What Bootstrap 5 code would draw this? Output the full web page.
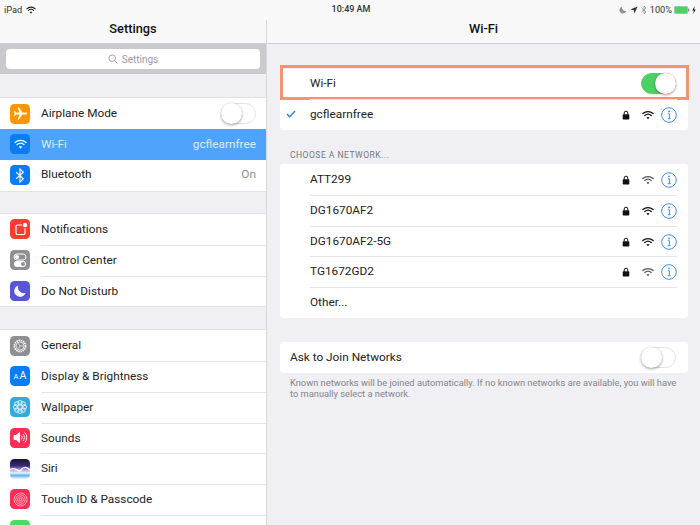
<!DOCTYPE html>
<html lang="en">
<head>
<meta charset="utf-8">
<title>Wi-Fi Settings</title>
<link href="https://cdn.jsdelivr.net/npm/bootstrap@5.3.0/dist/css/bootstrap.min.css" rel="stylesheet">
<style>
html,body{height:525px;overflow:hidden}
body{background:#efeff4;font-family:Roboto,"Liberation Sans",sans-serif;font-size:11.8px;color:#222}
.ios-status{height:20px;background:#f8f8f8;font-size:9.2px;color:#333;padding:0 4px}
.ios-clock{position:absolute;left:2px;right:0;text-align:center;font-weight:500;font-size:9px}
.ios-side{width:267px;flex:none;border-right:1px solid #d8d8dc;height:505px;overflow:hidden}
.ios-main{flex:1 1 auto;min-width:0;padding:0 12px 0 13px}
.ios-nav{height:24px;background:#f8f8f8;border-bottom:1px solid #cfcfd3;font-size:12.8px;font-weight:500;color:#111;padding-bottom:5px}
.ios-nav-main{margin:0 -12px 0 -13px}
.ios-search{height:30px;background:#c9c9ce;padding:5px 6px}
.ios-field{height:20px;background:#fff;border-radius:4px;color:#9a9a9f;font-size:10px}
.ios-group{background:#fff;box-shadow:0 -1px #e3e3e7,0 1px #e3e3e7;margin-top:23.5px}
.ios-g1{margin-top:24.25px}
.ios-g3{margin-top:24px}
.ios-row{height:30.75px;padding-left:10px}
.ios-row-on{background:#4fa3fa;color:#d9ecff}
.ios-ic{width:20px;height:20px;border-radius:4.5px;flex:none;margin-right:11px}
.ios-body{height:100%;padding-right:10px;min-width:0}
.ios-row+.ios-row .ios-body{border-top:1px solid #e6e6ea}
.ios-row-on .ios-body,.ios-row-on+.ios-row .ios-body{border-top:0!important}
.ios-val{color:#8e8e93}
.ios-row-on .ios-val{color:#d9ecff}
.ios-switch{width:35px;height:21px;border-radius:11px;background:#fff;border:1px solid #e2e2e6;position:relative;flex:none}
.ios-knob{position:absolute;left:-1px;top:-1px;width:21px;height:21px;border-radius:50%;background:#fff;box-shadow:0 1px 3px rgba(0,0,0,.4)}
.ios-switch-on{background:#4cd264;border-color:#4cd264}
.ios-switch-on .ios-knob{left:13px}
.ios-main .ios-switch{margin-right:1px}
.ios-card{background:#fff;border-radius:3px}
.ios-card-first{margin-top:24.5px}
.ios-card-first .ios-drow{height:30.5px}
.ios-drow{height:30.7px;padding-right:11px;position:relative}
.ios-indent{width:30px;flex:none}
.ios-dbody{height:100%;min-width:0}
.ios-drow+.ios-drow .ios-dbody{border-top:1px solid #e6e6ea}
.ios-head{font-size:8.6px;color:#77777c;letter-spacing:.45px;padding:20px 0 4.8px 10px;line-height:10px}
.ios-hl{position:absolute;left:0;right:-1px;top:-3.5px;bottom:-1px;border:3px solid #f4936f;pointer-events:none}
.ios-foot{font-size:9.3px;line-height:11.2px;color:#85858a;padding:4px 10px 0}
.ios-lock{margin-right:12px}
.ios-wifi{margin-right:7px}
.ios-ask{margin-top:24.7px;padding-left:10px}
.ios-ask .ios-drow{height:30.5px}
.ios-check{width:30px;flex:none;padding-left:6px}
.ios-tray{gap:3px}
.ios-batt,.ios-bolt{margin-left:-1px}
</style>
</head>
<body>
<svg width="0" height="0" class="position-absolute">
<defs>
<symbol id="wifi" viewBox="0 0 14 11">
<path d="M1 3.800C4.400.7 9.600.7 13 3.800" fill="none" stroke="currentColor" stroke-width="1.500" stroke-linecap="round"/>
<path d="M3.300 6.100C5.400 4.300 8.600 4.300 10.700 6.100" fill="none" stroke="currentColor" stroke-width="1.500" stroke-linecap="round"/>
<path d="M7 10.600 5.200 8.400C6.300 7.600 7.700 7.600 8.800 8.400Z" fill="currentColor"/>
</symbol>
<symbol id="lock" viewBox="0 0 8 10">
<rect x=".7" y="4.200" width="6.600" height="5.300" rx=".8" fill="#111"/>
<path d="M2.200 4.500V3A1.800 1.800 0 0 1 5.800 3V4.500" fill="none" stroke="#111" stroke-width="1"/>
</symbol>
<symbol id="info" viewBox="0 0 16 16">
<circle cx="8" cy="8" r="7.300" fill="none" stroke="#3e8fe8" stroke-width="1"/>
<circle cx="8" cy="4.400" r=".9" fill="#3e8fe8"/>
<path d="M6.800 6.800H8.400V11.500M6.600 11.700H9.600" fill="none" stroke="#3e8fe8" stroke-width="1"/>
</symbol>
</defs>
</svg>

<div class="ios-status d-flex align-items-center position-relative">
<span>iPad</span>
<svg class="ms-1" width="10" height="8" style="color:#222"><use href="#wifi"/></svg>
<span class="ios-clock">10:49 AM</span>
<div class="ios-tray ms-auto d-flex align-items-center position-relative">
<svg width="8" height="8" viewBox="0 0 8 8"><path d="M3 .8A3.400 3.400 0 1 0 7.200 5 3.600 3.600 0 0 1 3 .8Z" fill="#8e8e93"/></svg>
<svg width="8" height="8" viewBox="0 0 8 8"><path d="M7.600.4 .4 3.600 3.800 4.200 4.400 7.600Z" fill="#333"/></svg>
<svg width="6" height="10" viewBox="0 0 6 10"><path d="M.6 2.800 5 7 3 9V1L5 3 .6 7.200" fill="none" stroke="#8e8e93" stroke-width=".8"/></svg>
<span>100%</span>
<svg class="ios-batt" width="16" height="8" viewBox="0 0 16 8"><rect x=".3" y=".3" width="13.400" height="7.400" rx="1.200" fill="#4cd264" stroke="#bbb" stroke-width=".5"/><rect x="14.200" y="2.600" width="1.100" height="2.800" fill="#777"/></svg>
<svg class="ios-bolt" width="4" height="8" viewBox="0 0 4 8"><path d="M2.600 0 .3 4.400H1.800L1.200 8 3.700 3.400H2.200Z" fill="#222"/></svg>
</div>
</div>

<div class="d-flex">
<aside class="ios-side">
<div class="ios-nav d-flex align-items-center justify-content-center">Settings</div>
<div class="ios-search"><div class="ios-field d-flex align-items-center justify-content-center gap-1">
<svg width="10" height="10" viewBox="0 0 10 10"><circle cx="4.200" cy="4.200" r="3.300" fill="none" stroke="#9a9a9f" stroke-width=".9"/><path d="M6.700 6.700 9.400 9.400" stroke="#9a9a9f" stroke-width=".9"/></svg>
<span>Settings</span></div></div>

<div class="ios-group ios-g1">
<div class="ios-row d-flex align-items-center">
<div class="ios-ic d-flex align-items-center justify-content-center" style="background:#ff9500"><svg width="15" height="15" viewBox="0 0 16 16"><path d="M15 8c0-.7-.7-1.100-1.500-1.100H10L6.400 1.500H5L6.800 6.900H3.300L2 5.300H1L1.700 8 1 10.700H2L3.300 9.100H6.800L5 14.500H6.400L10 9.100H13.500C14.300 9.100 15 8.700 15 8Z" fill="#fff"/></svg></div>
<div class="ios-body flex-grow-1 d-flex align-items-center justify-content-between"><span>Airplane Mode</span><div class="ios-switch"><div class="ios-knob"></div></div></div>
</div>
<div class="ios-row ios-row-on d-flex align-items-center">
<div class="ios-ic d-flex align-items-center justify-content-center" style="background:#0a7cf5;color:#fff"><svg width="13" height="10"><use href="#wifi"/></svg></div>
<div class="ios-body flex-grow-1 d-flex align-items-center justify-content-between"><span>Wi-Fi</span><span class="ios-val">gcflearnfree</span></div>
</div>
<div class="ios-row d-flex align-items-center">
<div class="ios-ic d-flex align-items-center justify-content-center" style="background:#0a7cf5"><svg width="10" height="15" viewBox="0 0 10 16"><path d="M1 4.500 8.500 11.500 5 15V1L8.500 4.500 1 11.500" fill="none" stroke="#fff" stroke-width="1.200"/></svg></div>
<div class="ios-body flex-grow-1 d-flex align-items-center justify-content-between"><span>Bluetooth</span><span class="ios-val">On</span></div>
</div>
</div>

<div class="ios-group">
<div class="ios-row d-flex align-items-center">
<div class="ios-ic d-flex align-items-center justify-content-center" style="background:#ff3b30"><svg width="15" height="15" viewBox="0 0 15 15"><path d="M9 3H4.500A1.500 1.500 0 0 0 3 4.500V11A1.500 1.500 0 0 0 4.500 12.500H10.500A1.500 1.500 0 0 0 12 11V6.500" fill="none" stroke="#fff" stroke-width="1.200"/><circle cx="12" cy="3" r="2.200" fill="#fff"/></svg></div>
<div class="ios-body flex-grow-1 d-flex align-items-center"><span>Notifications</span></div>
</div>
<div class="ios-row d-flex align-items-center">
<div class="ios-ic d-flex align-items-center justify-content-center" style="background:#8e8e93"><svg width="14" height="15" viewBox="0 0 14 15"><rect x="1" y="1" width="12" height="6" rx="3" fill="none" stroke="#fff"/><circle cx="4" cy="4" r="2" fill="#fff"/><rect x="1" y="8" width="12" height="6" rx="3" fill="#fff"/><circle cx="10" cy="11" r="2" fill="#8e8e93"/></svg></div>
<div class="ios-body flex-grow-1 d-flex align-items-center"><span>Control Center</span></div>
</div>
<div class="ios-row d-flex align-items-center">
<div class="ios-ic d-flex align-items-center justify-content-center" style="background:#5856d6"><svg width="14" height="14" viewBox="0 0 14 14"><path d="M5.300 1.500A5.800 5.800 0 1 0 12.600 8.800 5.800 5.800 0 0 1 5.300 1.500Z" fill="#fff"/></svg></div>
<div class="ios-body flex-grow-1 d-flex align-items-center"><span>Do Not Disturb</span></div>
</div>
</div>

<div class="ios-group ios-g3">
<div class="ios-row d-flex align-items-center">
<div class="ios-ic d-flex align-items-center justify-content-center" style="background:#8e8e93"><svg width="16" height="16" viewBox="0 0 16 16"><circle cx="8" cy="8" r="5.600" fill="none" stroke="#fff" stroke-width="1.600" stroke-dasharray="1.500 .7"/><circle cx="8" cy="8" r="4" fill="none" stroke="#fff" stroke-width=".7"/><path d="M8 8 11 8M8 8 6.500 5.400M8 8 6.500 10.600" stroke="#fff" stroke-width=".6"/></svg></div>
<div class="ios-body flex-grow-1 d-flex align-items-center"><span>General</span></div>
</div>
<div class="ios-row d-flex align-items-center">
<div class="ios-ic d-flex align-items-center justify-content-center text-white" style="background:#0a7cf5;font-size:10.500px;line-height:1"><span style="font-size:7.500px;margin-right:1px">A</span>A</div>
<div class="ios-body flex-grow-1 d-flex align-items-center"><span>Display &amp; Brightness</span></div>
</div>
<div class="ios-row d-flex align-items-center">
<div class="ios-ic d-flex align-items-center justify-content-center" style="background:#34aadc"><svg width="16" height="16" viewBox="0 0 16 16" fill="none" stroke="#fff" stroke-width=".8"><circle cx="8" cy="3.800" r="2.300"/><circle cx="8" cy="12.200" r="2.300"/><circle cx="3.800" cy="8" r="2.300"/><circle cx="12.200" cy="8" r="2.300"/><circle cx="5" cy="5" r="2.300"/><circle cx="11" cy="5" r="2.300"/><circle cx="5" cy="11" r="2.300"/><circle cx="11" cy="11" r="2.300"/></svg></div>
<div class="ios-body flex-grow-1 d-flex align-items-center"><span>Wallpaper</span></div>
</div>
<div class="ios-row d-flex align-items-center">
<div class="ios-ic d-flex align-items-center justify-content-center" style="background:#ff2d55"><svg width="15" height="13" viewBox="0 0 15 13" fill="none" stroke="#fff" stroke-width=".9"><path d="M1 4.500H3L6.500 1.500V11.500L3 8.500H1Z" fill="#fff"/><path d="M8.300 4.500A3 3 0 0 1 8.300 8.500M10 3A5 5 0 0 1 10 10M11.700 1.500A7 7 0 0 1 11.700 11.500"/></svg></div>
<div class="ios-body flex-grow-1 d-flex align-items-center"><span>Sounds</span></div>
</div>
<div class="ios-row d-flex align-items-center">
<div class="ios-ic overflow-hidden" style="background:linear-gradient(180deg,#14142e 0%,#3a2a78 35%,#b9a7ee 55%,#e8f2ff 70%,#5ab8ea 82%,#f4f4fb 100%)"><svg width="20" height="20" viewBox="0 0 20 20" class="d-block"><path d="M0 11C5 6 8 15 11 11S17 8 20 11" fill="none" stroke="#fff" stroke-width="1.300"/></svg></div>
<div class="ios-body flex-grow-1 d-flex align-items-center"><span>Siri</span></div>
</div>
<div class="ios-row d-flex align-items-center">
<div class="ios-ic d-flex align-items-center justify-content-center" style="background:#ff2d55"><svg width="15" height="15" viewBox="0 0 15 15" fill="none" stroke="#ffc4d0" stroke-width=".8"><circle cx="7.500" cy="7.500" r="6.500"/><circle cx="7.500" cy="7.500" r="4.700"/><circle cx="7.500" cy="7.500" r="2.900"/><circle cx="7.500" cy="7.500" r="1.200"/></svg></div>
<div class="ios-body flex-grow-1 d-flex align-items-center"><span>Touch ID &amp; Passcode</span></div>
</div>
<div class="ios-row d-flex align-items-center">
<div class="ios-ic" style="background:#4cd964"></div>
<div class="ios-body flex-grow-1"></div>
</div>
</div>
</aside>

<main class="ios-main">
<div class="ios-nav ios-nav-main d-flex align-items-center justify-content-center">Wi-Fi</div>

<div class="ios-card ios-card-first">
<div class="ios-drow d-flex align-items-center">
<div class="ios-indent"></div>
<div class="ios-dbody flex-grow-1 d-flex align-items-center justify-content-between"><span>Wi-Fi</span><div class="ios-switch ios-switch-on"><div class="ios-knob"></div></div></div>
<div class="ios-hl"></div>
</div>
<div class="ios-drow d-flex align-items-center">
<div class="ios-check"><svg width="10" height="8" viewBox="0 0 10 8" class="d-block"><path d="M1 4 3.600 6.800 9 1" fill="none" stroke="#2f7fe0" stroke-width="1.400"/></svg></div>
<div class="ios-dbody flex-grow-1 d-flex align-items-center"><span>gcflearnfree</span><svg class="ms-auto ios-lock" width="8" height="10"><use href="#lock"/></svg><svg class="ios-wifi" width="12" height="10" style="color:#111"><use href="#wifi"/></svg><svg width="16" height="16"><use href="#info"/></svg></div>
</div>
</div>

<div class="ios-head">CHOOSE A NETWORK...</div>
<div class="ios-card">
<div class="ios-drow d-flex align-items-center"><div class="ios-indent"></div><div class="ios-dbody flex-grow-1 d-flex align-items-center"><span>ATT299</span><svg class="ms-auto ios-lock" width="8" height="10"><use href="#lock"/></svg><svg class="ios-wifi" width="12" height="10" style="color:#555"><use href="#wifi"/></svg><svg width="16" height="16"><use href="#info"/></svg></div></div>
<div class="ios-drow d-flex align-items-center"><div class="ios-indent"></div><div class="ios-dbody flex-grow-1 d-flex align-items-center"><span>DG1670AF2</span><svg class="ms-auto ios-lock" width="8" height="10"><use href="#lock"/></svg><svg class="ios-wifi" width="12" height="10" style="color:#111"><use href="#wifi"/></svg><svg width="16" height="16"><use href="#info"/></svg></div></div>
<div class="ios-drow d-flex align-items-center"><div class="ios-indent"></div><div class="ios-dbody flex-grow-1 d-flex align-items-center"><span>DG1670AF2-5G</span><svg class="ms-auto ios-lock" width="8" height="10"><use href="#lock"/></svg><svg class="ios-wifi" width="12" height="10" style="color:#111"><use href="#wifi"/></svg><svg width="16" height="16"><use href="#info"/></svg></div></div>
<div class="ios-drow d-flex align-items-center"><div class="ios-indent"></div><div class="ios-dbody flex-grow-1 d-flex align-items-center"><span>TG1672GD2</span><svg class="ms-auto ios-lock" width="8" height="10"><use href="#lock"/></svg><svg class="ios-wifi" width="12" height="10" style="color:#555"><use href="#wifi"/></svg><svg width="16" height="16"><use href="#info"/></svg></div></div>
<div class="ios-drow d-flex align-items-center"><div class="ios-indent"></div><div class="ios-dbody flex-grow-1 d-flex align-items-center"><span>Other...</span></div></div>
</div>

<div class="ios-card ios-ask">
<div class="ios-drow d-flex align-items-center justify-content-between"><span>Ask to Join Networks</span><div class="ios-switch"><div class="ios-knob"></div></div></div>
</div>
<div class="ios-foot">Known networks will be joined automatically. If no known networks are available, you will have to manually select a network.</div>
</main>
</div>
<script src="https://cdn.jsdelivr.net/npm/bootstrap@5.3.0/dist/js/bootstrap.bundle.min.js"></script>
</body>
</html>
